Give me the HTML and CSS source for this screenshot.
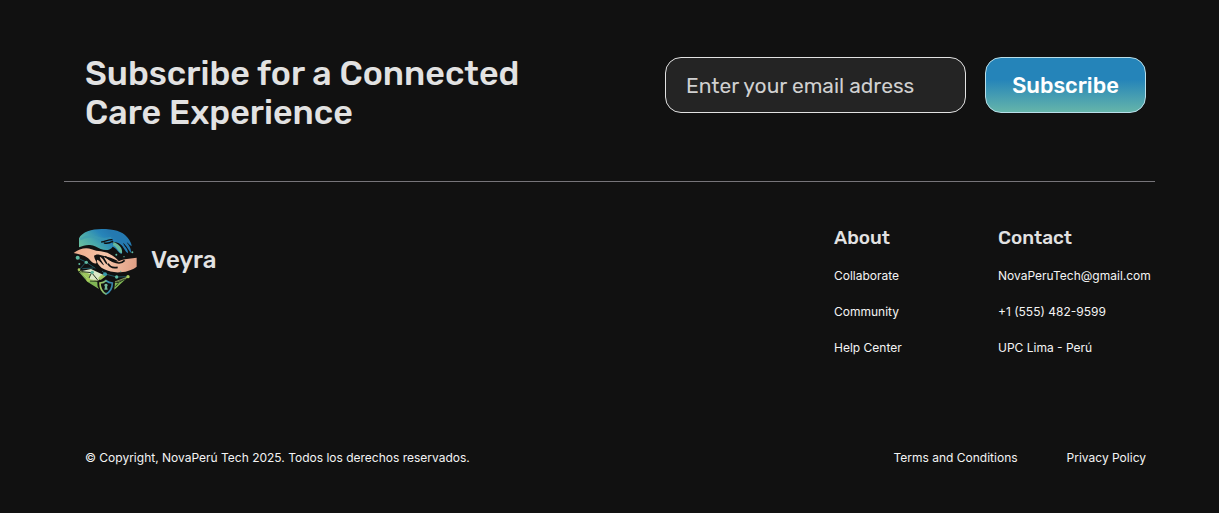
FILE: index.html
```html
<!DOCTYPE html>
<html lang="en">
<head>
<meta charset="utf-8">
<meta name="viewport" content="width=device-width, initial-scale=1">
<title>Veyra</title>
<link rel="stylesheet" href="styles.css">
</head>
<body>
<footer class="footer">
  <section class="subscribe">
    <h2 class="subscribe-title">Subscribe for a Connected<br>Care Experience</h2>
    <form class="subscribe-form">
      <input class="email" type="email" aria-label="Email address" placeholder="Enter your email adress">
      <button class="submit" type="submit">Subscribe</button>
    </form>
  </section>
  <div class="main">
    <a class="brand" href="#">
      <svg class="logo" viewBox="0 0 240 240" aria-hidden="true">
        <defs>
          <linearGradient id="hand" x1="60" y1="85" x2="120" y2="20" gradientUnits="userSpaceOnUse">
            <stop offset="0" stop-color="#68bd9f"/><stop offset=".4" stop-color="#46a6ad"/><stop offset=".75" stop-color="#2785b9"/><stop offset="1" stop-color="#2479b0"/>
          </linearGradient>
          <linearGradient id="skin" x1="20" y1="90" x2="215" y2="130" gradientUnits="userSpaceOnUse">
            <stop offset="0" stop-color="#eba98a"/><stop offset=".5" stop-color="#f6c5a9"/><stop offset="1" stop-color="#df9d83"/>
          </linearGradient>
          <linearGradient id="shield" x1="98" y1="0" x2="142" y2="0" gradientUnits="userSpaceOnUse">
            <stop offset="0" stop-color="#b3cf55"/><stop offset=".45" stop-color="#79b77e"/><stop offset=".6" stop-color="#3790b4"/><stop offset="1" stop-color="#397fa7"/>
          </linearGradient>
        </defs>
        <path fill="url(#hand)" d="M39 76V49C48 30 77 21 107 21c36 0 62 7 76 24 9 10 14 20 14 28-6-4-10-9-15-12 7 9 14 18 13 31-7-6-12-20-24-30 4 12 16 18 15 32-9-4-12-19-23-27-8-6-17-7-25-5 8 7 20 10 25 19 4 6 5 12 4 15-10-3-14-17-27-22-6 11-22 13-36 7-11-4-19-11-32-12-12-1-22 2-33 7z"/>
        <path fill="none" stroke="#3c9bb2" stroke-width="7" opacity=".55" d="M42 52c20-11 40-11 56-4 12 5 24 3 38 0"/>
        <path fill="none" stroke="#111" stroke-width="4" stroke-linecap="round" d="M107 60c10-1 19-7 31-7M115 63c10 2 17 0 25-5"/>
        <path fill="#66ba9e" d="M142 60c10 3 20 11 24 19 2 5 3 11 2 15-12-3-14-19-27-24z"/>
        <path fill="url(#skin)" d="M23 93c17-13 37-18 54-11 18 8 37 4 54 14 13 7 23 15 29 23-11-5-23-12-34-14l-26-7c-9-2-16 1-15 8 1 8 8 12 6 18-5 3-14-4-20-11-8-9-19-14-48-20z"/>
        <path fill="url(#skin)" d="M93 113c9 2 15 15 21 17-3-9-11-15-13-26 12 4 14 20 24 24-2-9-8-14-11-23 14 3 18 15 31 15 10 0 18-5 32-8l35-5v27c-10 8-27 15-49 17-20 1-34-2-48-9-11-6-24-17-22-29z"/>
        <path fill="none" stroke="#111" stroke-width="5" d="M117 103c15 11 24 19 42 20 8 0 13-4 17-8M85 102l16 3M126 125c6 11 16 14 29 11"/>
        <g fill="none" stroke="#287888" stroke-width="2"><path d="M35 108l25 12-20 23M60 120l28 19M108 147l10 9 34 9 34-1M49 140l33-2"/></g>
        <g fill="#5fb8a0"><circle cx="35" cy="107" r="6"/><circle cx="61" cy="121" r="5"/><circle cx="40" cy="126" r="3"/><circle cx="117" cy="157" r="6" fill="#389daa"/><circle cx="152" cy="165" r="5"/><circle cx="151" cy="98" r="3"/><circle cx="174" cy="104" r="2"/><circle cx="199" cy="91" r="3"/><circle cx="164" cy="148" r="2"/></g>
        <path fill="#80b654" d="M36 147c21 10 30 21 62 34l2 21-35-22zM185 166l-40 37 1-21c14-3 27-10 39-16z"/>
        <path fill="#dce9c8" d="M47 147l28-6 38 18-16 17-31-4z"/>
        <path fill="#9dc65d" d="M43 145l30 12-7 16zM106 158l13 5-15 11-8-5z"/>
        <path fill="none" stroke="#27351f" stroke-width="3" d="M47 149l30 3 18 22M77 152l-10 20M72 177l24 1v16M177 171l-21 11-9-2M157 184l-9 10"/>
        <path fill="none" stroke="#c6d984" stroke-width="2" d="M39 144l28 29 28 2 13-16M183 166l-37 14"/>
        <g fill="#a8cc5b"><circle cx="39" cy="143" r="4"/><circle cx="67" cy="173" r="6"/><circle cx="186" cy="164" r="5"/></g>
        <circle cx="79" cy="151" r="5" fill="#5fb8a0"/>
        <path fill="#111" stroke="#111" stroke-width="11" d="M120 174c8 6 13 7 21 7 0 18-5 28-21 36-16-8-20-18-20-36 8 0 13-1 20-7z"/>
        <path fill="#111" stroke="url(#shield)" stroke-width="5" d="M120 176c7 6 12 7 19 7 0 17-5 26-19 33-14-7-18-16-18-33 7 0 12-1 18-7z"/>
        <path fill="#75b99a" d="M120 185a5 5 0 0 1 3 9l2 9h-10l2-9a5 5 0 0 1 3-9z"/>
      </svg>
      <span class="brand-name">Veyra</span>
    </a>
    <nav class="columns" aria-label="Footer">
      <section>
        <h3 class="column-title">About</h3>
        <ul class="links">
          <li><a href="#">Collaborate</a></li>
          <li><a href="#">Community</a></li>
          <li><a href="#">Help Center</a></li>
        </ul>
      </section>
      <section>
        <h3 class="column-title">Contact</h3>
        <ul class="links">
          <li><a href="mailto:NovaPeruTech@gmail.com">NovaPeruTech@gmail.com</a></li>
          <li><a href="tel:+15554829599">+1 (555) 482-9599</a></li>
          <li>UPC Lima - Perú</li>
        </ul>
      </section>
    </nav>
  </div>
  <div class="legal">
    <p class="copyright">© Copyright, NovaPerú Tech 2025. Todos los derechos reservados.</p>
    <nav class="legal-links" aria-label="Legal">
      <a href="#">Terms and Conditions</a>
      <a href="#">Privacy Policy</a>
    </nav>
  </div>
</footer>
</body>
</html>
```
FILE: styles.css
```css
* { box-sizing: border-box; }
body {
  margin: 0;
  background: #111;
  color: #f4f4f4;
  font: 400 12px/20px Inter, "Liberation Sans", sans-serif;
}
h2, h3, p, ul { margin: 0; padding: 0; }
ul { list-style: none; }
a { color: inherit; text-decoration: none; }
.footer { padding: 54px 64px 44px; }
.subscribe {
  display: flex;
  flex-wrap: wrap;
  justify-content: space-between;
  align-items: flex-start;
  gap: 24px;
  padding: 0 9px 49px 21px;
  border-bottom: 1px solid #77757a;
}
.subscribe-title {
  color: #e2e2e2;
  font: 500 34px/39px Rubik, Roboto, sans-serif;
}
.subscribe-form { display: flex; gap: 19px; padding-top: 3px; }
.email, .submit {
  height: 56px;
  border: 1px solid #e2e2e2;
  border-radius: 16px;
}
.email {
  width: 301px;
  min-width: 0;
  padding: 0 20px;
  background: #242424;
  color: #e2e2e2;
  font: 400 21px Rubik, Roboto, sans-serif;
}
.email::placeholder { color: #d0d0d0; opacity: 1; }
.submit {
  width: 161px;
  padding: 0;
  border-color: #b9dfea;
  background: linear-gradient(#2584b9 40%, #65b5aa);
  color: #fff;
  font: 500 22px Rubik, Roboto, sans-serif;
}
.main {
  display: flex;
  flex-wrap: wrap;
  justify-content: space-between;
  align-items: flex-start;
  gap: 24px;
  padding: 40px 0 90px 2px;
}
.brand { display: flex; align-items: center; gap: 5px; }
.logo { width: 80px; height: 80px; }
.brand-name {
  padding-bottom: 4px;
  color: #e2e2e2;
  font: 500 24px/28px Rubik, Roboto, sans-serif;
}
.columns { display: grid; grid-template-columns: 140px minmax(157px, auto); gap: 24px; padding-top: 4px; }
.column-title {
  color: #e2e2e2;
  font: 500 19px/24px Rubik, Roboto, sans-serif;
}
.links { display: grid; gap: 16px; padding-top: 16px; }
.legal {
  display: flex;
  flex-wrap: wrap;
  justify-content: space-between;
  gap: 16px;
  padding: 0 9px 0 21px;
}
.legal-links { display: flex; gap: 49px; }
```
